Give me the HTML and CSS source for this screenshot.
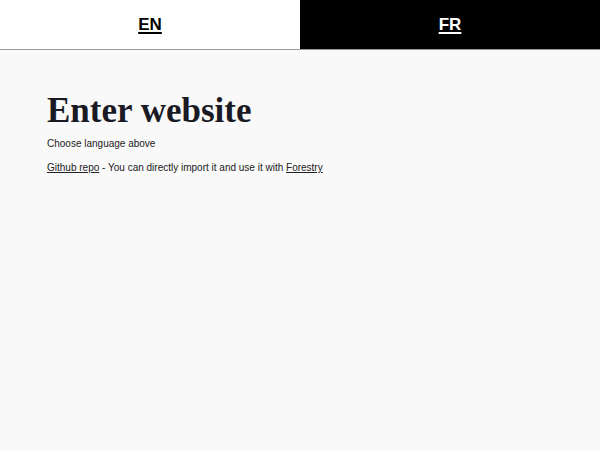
FILE: index.html
```html
<!DOCTYPE html>
<html>
<head>
<meta charset="utf-8">
<link rel="stylesheet" href="styles.css">
</head>
<body>
<nav class="langs">
  <a class="lang lang-en" href="#">EN</a>
  <a class="lang lang-fr" href="#">FR</a>
</nav>
<main class="content">
  <h1 class="title">Enter website</h1>
  <p class="text">Choose language above</p>
  <p class="text"><a href="#">Github repo</a> - You can directly import it and use it with <a href="#">Forestry</a></p>
</main>
</body>
</html>
```
FILE: styles.css
```css
html, body {
  margin: 0;
  padding: 0;
  background: #f9f9f9;
}
body {
  font-family: "Liberation Sans", Arial, sans-serif;
  color: #222;
}
.langs {
  display: flex;
  height: 49px;
  border-bottom: 1px solid #999;
}
.lang {
  flex: 1;
  display: flex;
  align-items: center;
  justify-content: center;
  font-weight: bold;
  font-size: 17px;
  text-decoration: underline;
  text-decoration-thickness: 2px;
  text-underline-offset: 2px;
}
.lang-en {
  background: #fff;
  color: #000;
}
.lang-fr {
  background: #000;
  color: #fff;
}
.content {
  padding: 42px 47px;
}
.title {
  font-family: "Liberation Serif", "Times New Roman", serif;
  font-size: 35px;
  font-weight: bold;
  color: #1a1a24;
  margin: 0 0 8px;
  line-height: 38px;
}
.text {
  font-size: 10px;
  margin: 0 0 12px;
  line-height: 12px;
}
.text a {
  color: #222;
}
```
